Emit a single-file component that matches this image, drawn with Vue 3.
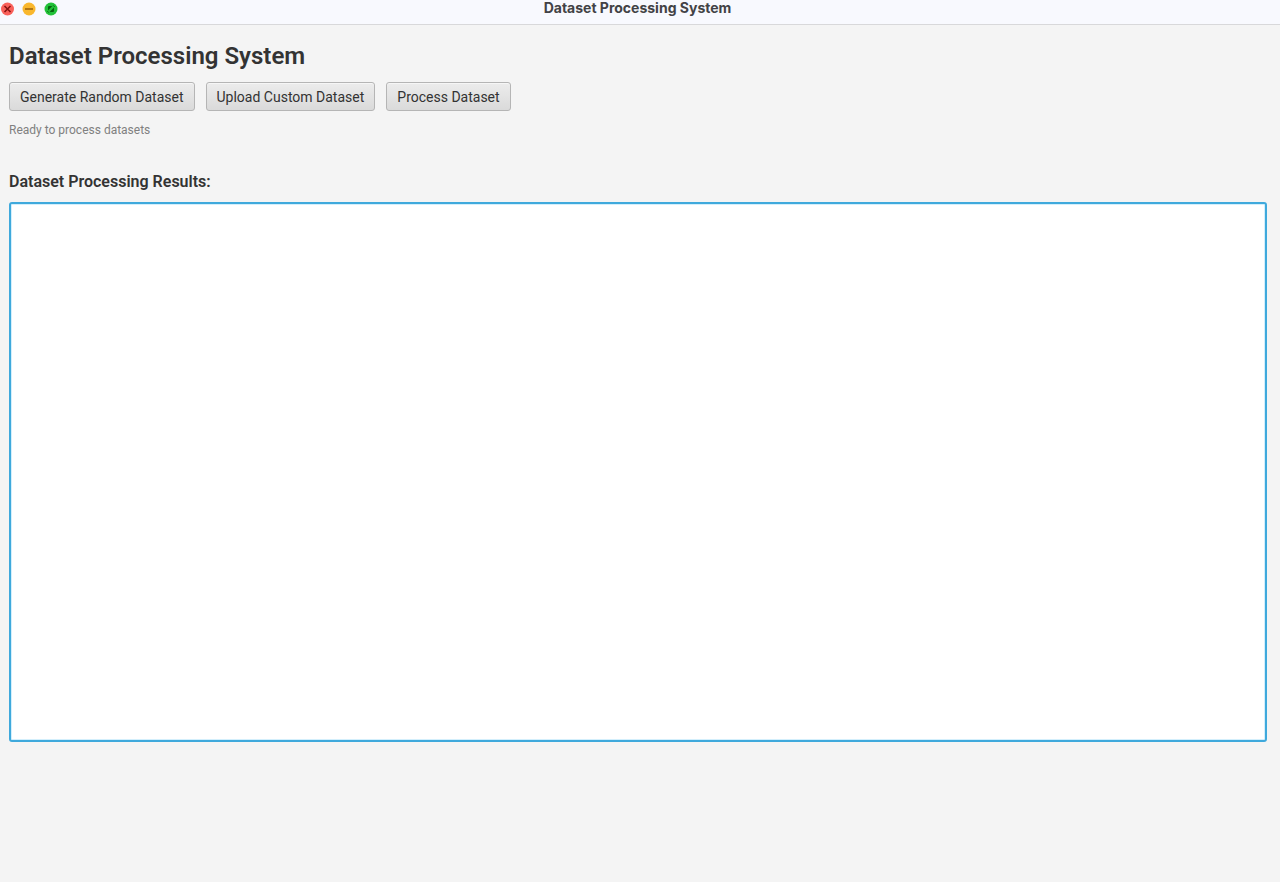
<script setup>
import { ref } from 'vue'

const title = 'Dataset Processing System'
const actions = ['Generate Random Dataset', 'Upload Custom Dataset', 'Process Dataset']
const results = ref('')
</script>

<template>
  <div class="window">
    <header class="titlebar">
      <div class="controls">
        <button type="button" class="control" aria-label="Close">
          <svg viewBox="0 0 14 14" width="14" height="14">
            <circle cx="7.5" cy="7" r="6.5" fill="#f9605a" />
            <path d="M4.5 4l6 6M10.5 4l-6 6" stroke="#82100f" stroke-width="1.5" />
          </svg>
        </button>
        <button type="button" class="control" aria-label="Minimize">
          <svg viewBox="0 0 14 14" width="14" height="14">
            <circle cx="7" cy="7" r="6.5" fill="#f9b72e" />
            <path d="M3 7h8" stroke="#98600c" stroke-width="1.5" />
          </svg>
        </button>
        <button type="button" class="control" aria-label="Full screen">
          <svg viewBox="0 0 14 14" width="14" height="14">
            <circle cx="7" cy="7" r="6.5" fill="#22c138" />
            <path d="M4 8.4V5Q4 4 5 4H8.4zM10 5.6V9Q10 10 9 10H5.6z" fill="#07610f" />
            <path d="M9.2 3.4l1.4 1.4M3.4 9.2l1.4 1.4" stroke="#07610f" />
          </svg>
        </button>
      </div>
      <div class="caption">{{ title }}</div>
    </header>
    <main class="content">
      <h1>{{ title }}</h1>
      <div class="actions">
        <button v-for="label in actions" :key="label" type="button" class="action">{{ label }}</button>
      </div>
      <p class="status" role="status">Ready to process datasets</p>
      <label class="results-label" for="results">Dataset Processing Results:</label>
      <textarea id="results" v-model="results" class="results" readonly></textarea>
    </main>
  </div>
</template>

<style>
body {
  background: #f4f4f4;
}
</style>

<style scoped>
.window {
  display: flex;
  flex-direction: column;
  min-height: 100vh;
  background: #f4f4f4;
  color: #333;
  font-family: Roboto, "Liberation Sans", sans-serif;
}

.titlebar {
  display: grid;
  grid-template-columns: 1fr auto 1fr;
  box-sizing: border-box;
  height: 25px;
  padding: 0 5px 0 0;
  background: #f8f9fe;
  border-bottom: 1px solid #d8d8da;
}

.controls {
  display: flex;
  gap: 8px;
  padding-top: 2px;
}

.control {
  width: 14px;
  height: 14px;
  padding: 0;
  border: 0;
  background: none;
}

.control svg {
  display: block;
}

.caption {
  color: #424245;
  font-family: Inter, "Liberation Sans", sans-serif;
  font-size: 14px;
  font-weight: 700;
  line-height: 16px;
}

.content {
  display: flex;
  flex-direction: column;
  padding: 16px 13px 16px 9px;
}

h1 {
  margin: 0 0 11px;
  font-size: 24px;
  font-weight: 600;
  line-height: 30px;
}

.actions {
  display: flex;
  gap: 11px;
}

.action {
  height: 29px;
  padding: 0 10px;
  border: 1px solid #b5b5b5;
  border-radius: 3px;
  background: linear-gradient(#ececec, #dadada);
  box-shadow: inset 0 1px #f6f6f6;
  color: #333;
  font-family: inherit;
  font-size: 14px;
  line-height: 20px;
}

.status {
  margin: 11px 0 32px;
  color: #808080;
  font-size: 12px;
  line-height: 16px;
}

.results-label {
  margin-bottom: 8px;
  font-size: 16px;
  font-weight: 600;
  line-height: 24px;
}

.results {
  display: block;
  box-sizing: border-box;
  width: 100%;
  height: calc(100vh - 342px);
  padding: 8px;
  border: 2px solid #3fa9dc;
  border-radius: 3px;
  outline: 0;
  background: #fff;
  box-shadow: inset 0 0 0 1px #d3effc;
  color: #333;
  font-family: inherit;
  font-size: 14px;
  resize: none;
}
</style>
